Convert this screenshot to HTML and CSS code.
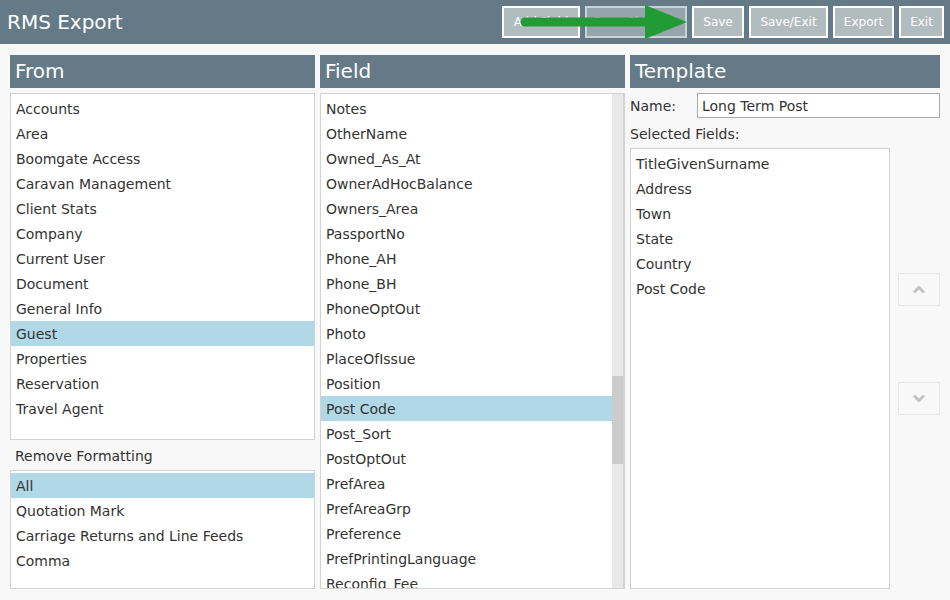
FILE: index.html
```html
<!DOCTYPE html>
<html>
<head>
<meta charset="utf-8">
<link rel="stylesheet" href="styles.css">
</head>
<body>
<div class="topbar">
  <div class="title">RMS Export</div>
  <div class="actions">
    <button class="btn w-add">Add Field</button>
    <button class="btn dim w-chg">Save Changes</button>
    <button class="btn w-save">Save</button>
    <button class="btn w-sx">Save/Exit</button>
    <button class="btn w-exp">Export</button>
    <button class="btn w-exit">Exit</button>
  </div>
  <svg class="arrow" width="180" height="40" viewBox="0 0 180 40">
    <line x1="8" y1="20" x2="135" y2="20" stroke="#239b35" stroke-width="9" stroke-linecap="round"/>
    <polygon points="128,3 170,20 128,37" fill="#239b35"/>
  </svg>
</div>
<div class="main">
  <div class="col">
    <div class="head">From</div>
    <div class="list from">
      <div class="item">Accounts</div>
      <div class="item">Area</div>
      <div class="item">Boomgate Access</div>
      <div class="item">Caravan Management</div>
      <div class="item">Client Stats</div>
      <div class="item">Company</div>
      <div class="item">Current User</div>
      <div class="item">Document</div>
      <div class="item">General Info</div>
      <div class="item sel">Guest</div>
      <div class="item">Properties</div>
      <div class="item">Reservation</div>
      <div class="item">Travel Agent</div>
    </div>
    <div class="label rf">Remove Formatting</div>
    <div class="list fmt">
      <div class="item sel">All</div>
      <div class="item">Quotation Mark</div>
      <div class="item">Carriage Returns and Line Feeds</div>
      <div class="item">Comma</div>
    </div>
  </div>
  <div class="col">
    <div class="head">Field</div>
    <div class="list field">
      <div class="items">
        <div class="item">Notes</div>
        <div class="item">OtherName</div>
        <div class="item">Owned_As_At</div>
        <div class="item">OwnerAdHocBalance</div>
        <div class="item">Owners_Area</div>
        <div class="item">PassportNo</div>
        <div class="item">Phone_AH</div>
        <div class="item">Phone_BH</div>
        <div class="item">PhoneOptOut</div>
        <div class="item">Photo</div>
        <div class="item">PlaceOfIssue</div>
        <div class="item">Position</div>
        <div class="item sel">Post Code</div>
        <div class="item">Post_Sort</div>
        <div class="item">PostOptOut</div>
        <div class="item">PrefArea</div>
        <div class="item">PrefAreaGrp</div>
        <div class="item">Preference</div>
        <div class="item">PrefPrintingLanguage</div>
        <div class="item">Reconfig_Fee</div>
      </div>
      <div class="scroll"><div class="thumb"></div></div>
    </div>
  </div>
  <div class="col tpl">
    <div class="head">Template</div>
    <div class="namerow">
      <span class="label">Name:</span>
      <div class="input">Long Term Post</div>
    </div>
    <div class="label sf">Selected Fields:</div>
    <div class="selrow">
      <div class="list chosen">
        <div class="item">TitleGivenSurname</div>
        <div class="item">Address</div>
        <div class="item">Town</div>
        <div class="item">State</div>
        <div class="item">Country</div>
        <div class="item">Post Code</div>
      </div>
      <div class="movers">
        <div class="mv up"><svg width="14" height="9" viewBox="0 0 14 9"><polyline points="2,7.5 7,2.5 12,7.5" fill="none" stroke="#c4c4c4" stroke-width="3"/></svg></div>
        <div class="mv down"><svg width="14" height="9" viewBox="0 0 14 9"><polyline points="2,1.5 7,6.5 12,1.5" fill="none" stroke="#c4c4c4" stroke-width="3"/></svg></div>
      </div>
    </div>
  </div>
</div>
</body>
</html>
```
FILE: styles.css
```css
* { box-sizing: border-box; }
html, body { margin: 0; padding: 0; }
body {
  width: 950px; height: 600px; overflow: hidden;
  background: #f8f8f8;
  font-family: "DejaVu Sans", Verdana, sans-serif;
  font-size: 14px;
  color: #333;
}
.topbar {
  position: relative;
  height: 44px;
  background: #647a87;
  display: flex; align-items: center; justify-content: space-between;
  padding: 0 6px 0 7px;
}
.title { color: #fff; font-size: 20px; padding-bottom: 1px; }
.actions { display: flex; gap: 5px; padding-bottom: 1px; }
.btn {
  font-family: inherit; font-size: 12px; color: #fff;
  background: #b1bcbf; border: 2px solid #fff;
  height: 32px; padding: 0; margin: 0; white-space: nowrap; overflow: hidden;
}
.btn.dim { background: #95a5ab; border-color: #c9d2d5; color: #c2cbce; }
.w-add { width: 78px; }
.w-chg { width: 102px; }
.w-save { width: 52px; }
.w-sx { width: 79px; }
.w-exp { width: 61px; }
.w-exit { width: 45px; }
.arrow { position: absolute; left: 517px; top: 2px; }
.main {
  display: flex; gap: 5px;
  padding: 11px 10px 11px 10px;
  height: 556px;
}
.col { width: 305px; display: flex; flex-direction: column; }
.col.tpl { width: 310px; }
.head {
  height: 33px; background: #647a87; color: #fff;
  font-size: 20px; padding: 2px 0 0 5px; line-height: 28px;
  margin-bottom: 5px; flex: none;
}
.list { background: #fff; border: 1px solid #d2d2d2; padding-top: 2px; }
.item { height: 25px; line-height: 25px; padding: 1px 0 0 5px; white-space: nowrap; }
.item.sel { background: #b0d8e6; }
.from { height: 347px; flex: none; }
.label { color: #333; }
.rf { padding: 1px 0 0 5px; height: 30px; line-height: 30px; flex: none; }
.fmt { flex: 1; }
.field { flex: 1; display: flex; overflow: hidden; }
.field .items { flex: 1; }
.scroll { width: 12px; background: #e8e8e8; border-right: 1px solid #d2d2d2; margin-top: -2px; display: flex; flex-direction: column; }
.scroll .thumb { margin-top: 282px; height: 88px; background: #cbcbcb; }
.namerow { display: flex; align-items: center; height: 25px; flex: none; }
.namerow .label { width: 67px; padding-top: 1px; }
.input {
  flex: 1; height: 25px; background: #fff; border: 1px solid #aaa;
  padding: 1px 0 0 4px; line-height: 22px;
}
.sf { height: 30px; line-height: 30px; padding-top: 1px; flex: none; }
.selrow { flex: 1; display: flex; }
.chosen { width: 260px; padding-top: 2px; }
.movers { flex: 1; display: flex; flex-direction: column; padding: 125px 0 0 8px; gap: 76px; }
.mv {
  width: 42px; height: 33px; border: 1px solid #e6e6e6; background: #f8f8f8;
  display: flex; align-items: center; justify-content: center;
}
```
